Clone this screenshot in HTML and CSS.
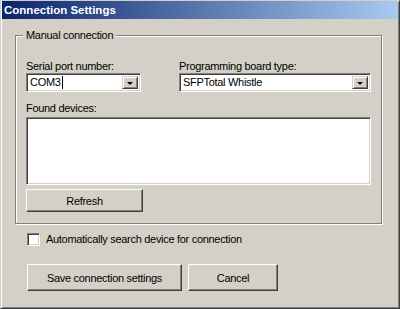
FILE: index.html
```html
<!DOCTYPE html>
<html>
<head>
    <title>Connection Settings</title>
    <link rel="stylesheet" href="styles.css">
</head>
<body>
    <div class="window">
        <div class="titlebar">Connection Settings</div>
        <div class="client">
            <div class="group">
                <span class="legend">Manual connection</span>
                <div class="row">
                    <div class="field port">
                        <div class="label">Serial port number:</div>
                        <div class="combo">
                            <span class="value">COM3<span class="cursor"></span></span>
                            <span class="drop"><span class="arrow"></span></span>
                        </div>
                    </div>
                    <div class="field board">
                        <div class="label">Programming board type:</div>
                        <div class="combo">
                            <span class="value">SFPTotal Whistle</span>
                            <span class="drop"><span class="arrow"></span></span>
                        </div>
                    </div>
                </div>
                <div class="label">Found devices:</div>
                <div class="listbox"></div>
                <button class="btn refresh">Refresh</button>
            </div>
            <label class="check">
                <span class="box"></span>
                Automatically search device for connection
            </label>
            <div class="actions">
                <button class="btn save">Save connection settings</button>
                <button class="btn cancel">Cancel</button>
            </div>
        </div>
    </div>
</body>
</html>
```

FILE: styles.css
```css
body {
    margin: 0;
    background: #d4d0c8;
    font-family: "Liberation Sans", Arial, sans-serif;
    font-size: 11px;
    letter-spacing: -0.3px;
    color: #000;
}

.window {
    width: 400px;
    height: 309px;
    box-sizing: border-box;
    background: #d4d0c8;
    border-top: 1px solid #d4d0c8;
    border-left: 1px solid #d4d0c8;
    border-right: 1px solid #404040;
    border-bottom: 1px solid #404040;
    box-shadow: inset 1px 1px #ffffff, inset -1px -1px #808080;
}

.titlebar {
    height: 18px;
    margin: 0 1px;
    padding-left: 2px;
    line-height: 18px;
    font-size: 11.5px;
    font-weight: bold;
    letter-spacing: 0;
    color: #ffffff;
    background: linear-gradient(to right, #0a246a, #a6caf0);
}

.client {
    padding: 16px 0 0 14px;
}

/* etched group box */
.group {
    position: relative;
    width: 367px;
    height: 189px;
    box-sizing: border-box;
    padding: 24px 0 0 10px;
    border: 1px solid #808080;
    box-shadow: inset 1px 1px #ffffff, 1px 1px #ffffff;
}

.legend {
    position: absolute;
    top: -7px;
    left: 7px;
    padding: 0 3px;
    line-height: 13px;
    background: #d4d0c8;
}

.label {
    line-height: 13px;
}

.row {
    display: flex;
    gap: 38px;
    margin-bottom: 10px;
}

.port {
    width: 115px;
}

.board {
    width: 192px;
}

.combo {
    display: flex;
    height: 19px;
    box-sizing: border-box;
    background: #ffffff;
    border-top: 1px solid #808080;
    border-left: 1px solid #808080;
    border-right: 1px solid #ffffff;
    border-bottom: 1px solid #ffffff;
    box-shadow: inset 1px 1px #404040, inset -1px -1px #d4d0c8;
    padding: 2px;
}

.combo .value {
    flex: 1;
    padding-left: 1px;
    line-height: 13px;
    display: flex;
    align-items: center;
}

.cursor {
    display: inline-block;
    width: 1px;
    height: 13px;
    margin-left: 1px;
    background: #000;
}

.drop {
    width: 16px;
    box-sizing: border-box;
    display: flex;
    align-items: center;
    justify-content: center;
    background: #d4d0c8;
    border-top: 1px solid #d4d0c8;
    border-left: 1px solid #d4d0c8;
    border-right: 1px solid #404040;
    border-bottom: 1px solid #404040;
    box-shadow: inset 1px 1px #ffffff, inset -1px -1px #808080;
}

.arrow {
    width: 0;
    height: 0;
    margin-top: 1px;
    border-left: 3px solid transparent;
    border-right: 3px solid transparent;
    border-top: 3px solid #000;
}

.listbox {
    width: 345px;
    height: 68px;
    margin-top: 2px;
    box-sizing: border-box;
    background: #ffffff;
    border-top: 1px solid #808080;
    border-left: 1px solid #808080;
    border-right: 1px solid #ffffff;
    border-bottom: 1px solid #ffffff;
    box-shadow: inset 1px 1px #404040, inset -1px -1px #d4d0c8;
}

.btn {
    display: block;
    box-sizing: border-box;
    padding: 0;
    font-family: "Liberation Sans", Arial, sans-serif;
    font-size: 11px;
    letter-spacing: -0.3px;
    color: #000;
    background: #d4d0c8;
    border-top: 1px solid #ffffff;
    border-left: 1px solid #ffffff;
    border-right: 1px solid #404040;
    border-bottom: 1px solid #404040;
    box-shadow: inset -1px -1px #808080;
}

.refresh {
    width: 117px;
    height: 23px;
    margin-top: 4px;
}

.check {
    display: flex;
    align-items: center;
    gap: 6px;
    margin: 9px 0 0 12px;
    line-height: 13px;
}

.box {
    width: 13px;
    height: 13px;
    box-sizing: border-box;
    background: #ffffff;
    border-top: 1px solid #808080;
    border-left: 1px solid #808080;
    border-right: 1px solid #ffffff;
    border-bottom: 1px solid #ffffff;
    box-shadow: inset 1px 1px #404040, inset -1px -1px #d4d0c8;
}

.actions {
    display: flex;
    gap: 6px;
    margin: 18px 0 0 12px;
}

.save {
    width: 155px;
    height: 27px;
}

.cancel {
    width: 90px;
    height: 27px;
}
```
